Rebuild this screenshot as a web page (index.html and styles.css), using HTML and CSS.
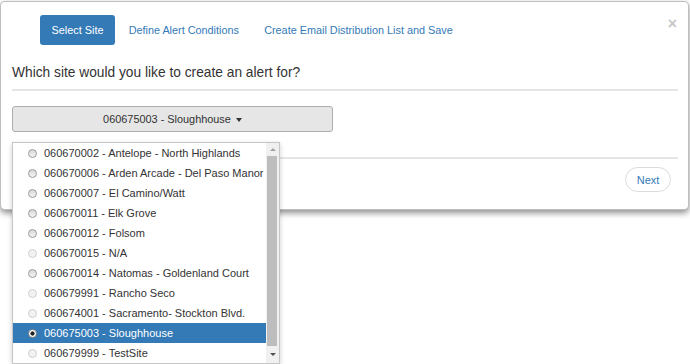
FILE: index.html
```html
<!DOCTYPE html>
<html>
<head>
<meta charset="utf-8">
<link rel="stylesheet" href="styles.css">
</head>
<body>
<div class="page">
<div class="modal">
  <div class="modal-head">
    <ul class="steps">
      <li class="step active">Select Site</li>
      <li class="step">Define Alert Conditions</li>
      <li class="step">Create Email Distribution List and Save</li>
    </ul>
    <button class="close">×</button>
  </div>
  <div class="modal-body">
    <h4 class="question">Which site would you like to create an alert for?</h4>
    <div class="picker">
      <button class="picker-btn">060675003 - Sloughhouse <span class="caret"></span></button>
      <div class="picker-menu">
        <ul class="options">
          <li class="option"><span class="radio"></span>060670002 - Antelope - North Highlands</li>
          <li class="option"><span class="radio"></span>060670006 - Arden Arcade - Del Paso Manor</li>
          <li class="option"><span class="radio"></span>060670007 - El Camino/Watt</li>
          <li class="option"><span class="radio"></span>060670011 - Elk Grove</li>
          <li class="option"><span class="radio"></span>060670012 - Folsom</li>
          <li class="option"><span class="radio off"></span>060670015 - N/A</li>
          <li class="option"><span class="radio"></span>060670014 - Natomas - Goldenland Court</li>
          <li class="option"><span class="radio off"></span>060679991 - Rancho Seco</li>
          <li class="option"><span class="radio off"></span>060674001 - Sacramento- Stockton Blvd.</li>
          <li class="option selected"><span class="radio on"></span>060675003 - Sloughhouse</li>
          <li class="option"><span class="radio off"></span>060679999 - TestSite</li>
        </ul>
        <div class="scrollbar">
          <div class="arrow up"></div>
          <div class="track"><div class="thumb"></div></div>
          <div class="arrow down"></div>
        </div>
      </div>
    </div>
  </div>
  <div class="modal-foot">
    <button class="next">Next</button>
  </div>
</div>
</div>
</body>
</html>
```

FILE: styles.css
```css
* { box-sizing: border-box; }
html, body {
  margin: 0;
  height: 100%;
}
body {
  background: #fff;
  font-family: "Liberation Sans", Arial, sans-serif;
  color: #333;
}
.page {
  min-height: 364px;
  padding-top: 1px;
}
.modal {
  position: relative;
  width: 689px;
  height: 209px;
  background: #fff;
  border: 1px solid rgba(0, 0, 0, 0.25);
  border-radius: 5px;
  box-shadow: 0 3px 6px rgba(0, 0, 0, 0.45);
  display: flex;
  flex-direction: column;
}
.modal-head {
  display: flex;
  justify-content: space-between;
  align-items: flex-start;
  padding: 13px 11px 0 39px;
}
.steps {
  list-style: none;
  margin: 0;
  padding: 0;
  display: flex;
  gap: 2px;
}
.step {
  font-size: 10.85px;
  line-height: 30px;
  padding: 0 11.6px;
  border-radius: 3px;
  color: #337ab7;
}
.step.active {
  background: #337ab7;
  color: #fff;
}
.close {
  border: 0;
  background: none;
  padding: 0;
  margin-top: 1px;
  font-family: "Liberation Sans", Arial, sans-serif;
  font-size: 16px;
  line-height: 16px;
  font-weight: bold;
  color: #000;
  opacity: 0.22;
}
.modal-body {
  padding: 0 10px 25px 11px;
}
.question {
  margin: 18px 0 0;
  font-size: 13.75px;
  line-height: 20px;
  font-weight: normal;
  color: #333;
  padding-bottom: 6px;
  border-bottom: 2px solid #e5e5e5;
}
.picker {
  position: relative;
  width: 321px;
  margin-top: 15px;
}
.picker-btn {
  display: block;
  width: 321px;
  height: 26px;
  background: #e6e6e6;
  border: 1px solid #adadad;
  border-radius: 3px;
  font-family: "Liberation Sans", Arial, sans-serif;
  font-size: 10.9px;
  color: #333;
  padding: 0;
}
.caret {
  display: inline-block;
  width: 0;
  height: 0;
  margin-left: 2px;
  vertical-align: middle;
  border-top: 4px solid #333;
  border-left: 3px solid transparent;
  border-right: 3px solid transparent;
}
.picker-menu {
  position: absolute;
  left: 0;
  top: 36px;
  width: 268px;
  height: 222px;
  display: flex;
  background: #fff;
  border: 1px solid #c6c6c6;
  box-shadow: 0 2px 5px rgba(0, 0, 0, 0.2);
  z-index: 5;
}
.options {
  list-style: none;
  margin: 0;
  padding: 0;
  flex: 1;
}
.option {
  display: flex;
  align-items: center;
  height: 20px;
  padding-left: 15px;
  font-size: 11px;
  color: #333;
  white-space: nowrap;
}
.option.selected {
  background: #337ab7;
  color: #fff;
}
.radio {
  width: 9px;
  height: 9px;
  border-radius: 50%;
  margin-right: 7px;
  border: 1px solid #9a9a9a;
  background: linear-gradient(#d8d8d8, #f4f4f4);
  flex: none;
}
.radio.off {
  border-color: #cfcfcf;
  background: #f2f2f2;
}
.radio.on {
  border-color: #8a8a8a;
  background: radial-gradient(circle, #222 0 1.8px, #fff 2.4px);
}
.scrollbar {
  width: 13px;
  display: flex;
  flex-direction: column;
  background: #f0f0f0;
}
.arrow {
  height: 13px;
  display: flex;
  align-items: center;
  justify-content: center;
}
.arrow.up::before {
  content: "";
  border-bottom: 3px solid #a3a3a3;
  border-left: 3px solid transparent;
  border-right: 3px solid transparent;
}
.arrow.down {
  height: 17px;
}
.arrow.down::before {
  content: "";
  border-top: 3px solid #505050;
  border-left: 3px solid transparent;
  border-right: 3px solid transparent;
}
.track {
  flex: 1;
  padding: 0 2px 0 1px;
  display: flex;
}
.thumb {
  flex: 1;
  background: #bdbdbd;
}
.modal-foot {
  margin: 0 10px 0 11px;
  border-top: 2px solid #e5e5e5;
  padding: 8px 7px 0 0;
  display: flex;
  justify-content: flex-end;
}
.next {
  width: 46px;
  height: 25px;
  border: 1px solid #dcdcdc;
  border-radius: 13px;
  background: #fff;
  color: #337ab7;
  font-family: "Liberation Sans", Arial, sans-serif;
  font-size: 11px;
  padding: 0;
}
```
